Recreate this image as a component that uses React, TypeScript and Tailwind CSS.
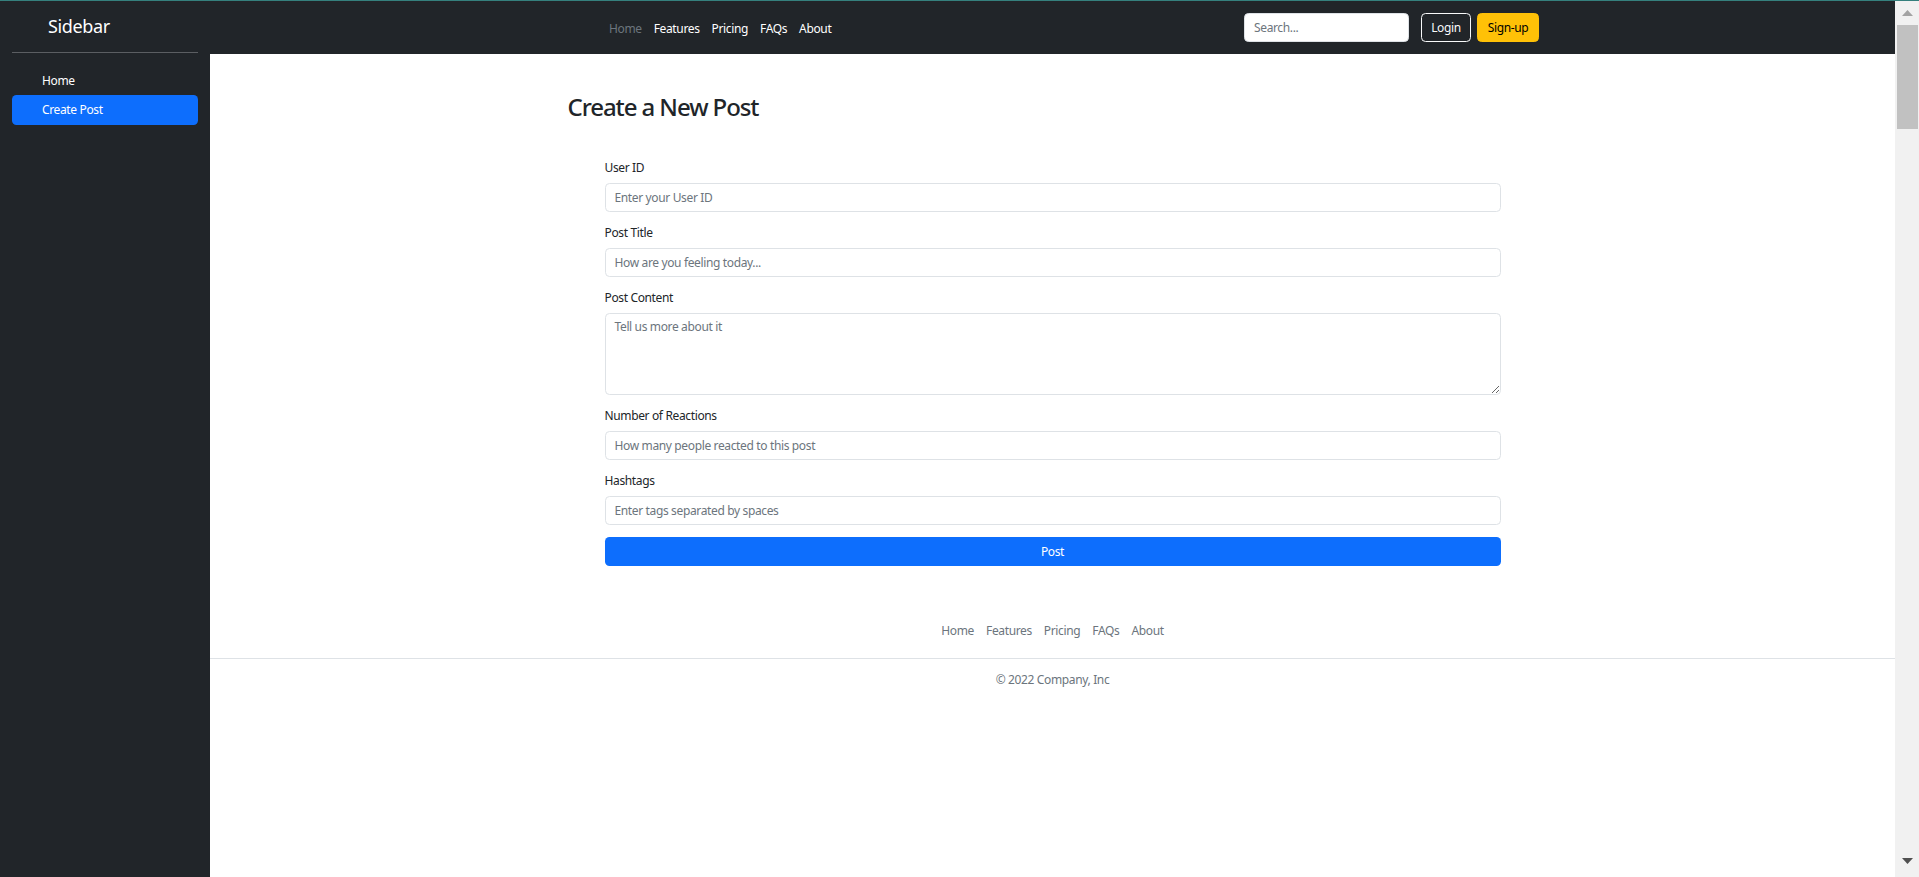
import { useState } from 'react'

const topLinks = ['Home', 'Features', 'Pricing', 'FAQs', 'About']

const fields = [
  { id: 'userId', label: 'User ID', placeholder: 'Enter your User ID' },
  { id: 'title', label: 'Post Title', placeholder: 'How are you feeling today...' },
  { id: 'content', label: 'Post Content', placeholder: 'Tell us more about it', area: true },
  { id: 'reactions', label: 'Number of Reactions', placeholder: 'How many people reacted to this post' },
  { id: 'tags', label: 'Hashtags', placeholder: 'Enter tags separated by spaces' },
]

// Fake browser scrollbar on the right edge
const Scrollbar = () => (
  <div className="w-[24px] shrink-0 bg-[#f1f1f1] flex flex-col items-center">
    <div className="h-[24px] w-full flex items-center justify-center">
      <svg width="11" height="7" viewBox="0 0 11 7">
        <path d="M5.5 0 L11 6 L0 6 Z" fill="#a3a3a3" />
      </svg>
    </div>
    <div className="w-full pl-[2px] pr-[1px]">
      <div className="h-[104px] bg-[#c1c1c1]" />
    </div>
    <div className="flex-1" />
    <div className="h-[24px] w-full flex items-start justify-center pt-[5px]">
      <svg width="11" height="7" viewBox="0 0 11 7">
        <path d="M0 0 L11 0 L5.5 6 Z" fill="#505050" />
      </svg>
    </div>
  </div>
)

const Sidebar = () => (
  <aside className="w-[210px] shrink-0 bg-[#212529] flex flex-col">
    <div className="h-[51px] flex items-center pl-[48px] pb-[1px] text-[18px] text-white">Sidebar</div>
    <div className="mx-[12px] h-px bg-[#5b5e62]" />
    <ul className="mt-[13px] px-[12px] flex flex-col">
      <li className="h-[29px] flex items-center pl-[30px] text-white rounded-[4.5px]">Home</li>
      <li className="h-[30px] flex items-center pl-[30px] text-white bg-[#0d6efd] rounded-[4.5px]">
        Create Post
      </li>
    </ul>
  </aside>
)

const Navbar = () => (
  <header className="h-[53px] shrink-0 bg-[#212529] flex items-center">
    <ul className="flex pl-[393px] pt-[2px]">
      {topLinks.map((l, i) => (
        <li key={l} className={`px-[6px] ${i === 0 ? 'text-[#6c757d]' : 'text-white'}`}>
          {l}
        </li>
      ))}
    </ul>
    <div className="flex-1" />
    <input
      placeholder="Search..."
      className="w-[165px] h-[29px] rounded-[4.5px] bg-white px-[9px] border border-[#dee2e6] text-[#212529] placeholder:text-[#6c757d] outline-none"
    />
    <button className="ml-[12px] h-[29px] w-[50px] rounded-[4.5px] border border-[#f8f9fa] text-[#f8f9fa]">
      Login
    </button>
    <button className="ml-[6px] mr-[356px] h-[29px] w-[62px] rounded-[4.5px] border border-[#ffc107] bg-[#ffc107] text-[#000]">
      Sign-up
    </button>
  </header>
)

const PostForm = () => {
  const [values, setValues] = useState<Record<string, string>>({})

  return (
    <form className="mx-[37px] mt-[38px]" onSubmit={(e) => e.preventDefault()}>
      {fields.map((f) => (
        <div key={f.id} className="mb-[12px]">
          <label htmlFor={f.id} className="block mb-[6px] leading-[18px] text-[#212529]">
            {f.label}
          </label>
          {f.area ? (
            <textarea
              id={f.id}
              placeholder={f.placeholder}
              value={values[f.id] || ''}
              onChange={(e) => setValues({ ...values, [f.id]: e.target.value })}
              className="block w-full h-[82px] rounded-[4.5px] border border-[#dee2e6] px-[9px] py-[4px] leading-[18px] placeholder:text-[#6c757d] outline-none"
            />
          ) : (
            <input
              id={f.id}
              placeholder={f.placeholder}
              value={values[f.id] || ''}
              onChange={(e) => setValues({ ...values, [f.id]: e.target.value })}
              className="block w-full h-[29px] rounded-[4.5px] border border-[#dee2e6] px-[9px] placeholder:text-[#6c757d] outline-none"
            />
          )}
        </div>
      ))}
      <button className="w-full h-[29px] rounded-[4.5px] bg-[#0d6efd] text-white">Post</button>
    </form>
  )
}

const Footer = () => (
  <footer className="mt-[50px]">
    <ul className="flex justify-center pb-[12px] border-b border-[#dee2e6]">
      {topLinks.map((l) => (
        <li key={l} className="px-[6px] py-[6px] text-[#6c757d]">
          {l}
        </li>
      ))}
    </ul>
    <p className="mt-[12px] text-center text-[#6c757d]">© 2022 Company, Inc</p>
  </footer>
)

export default function App() {
  return (
    <div className="h-screen overflow-hidden flex flex-col bg-white text-[12px] leading-[18px] tracking-[-0.03em] text-[#212529] [font-family:'Noto_Sans','Open_Sans',sans-serif]">
      <div className="h-px shrink-0 bg-[#35807d]" />
      <div className="flex-1 flex min-h-0">
        <Sidebar />
        <div className="flex-1 flex flex-col min-w-0">
          <Navbar />
          <main className="flex-1 bg-white">
            <div className="w-[970px] mx-auto pt-[38px]">
              <h2 className="text-[24px] leading-[29px] font-medium tracking-[-0.045em] text-[#212529]">
                Create a New Post
              </h2>
              <PostForm />
            </div>
            <Footer />
          </main>
        </div>
        <Scrollbar />
      </div>
    </div>
  )
}
